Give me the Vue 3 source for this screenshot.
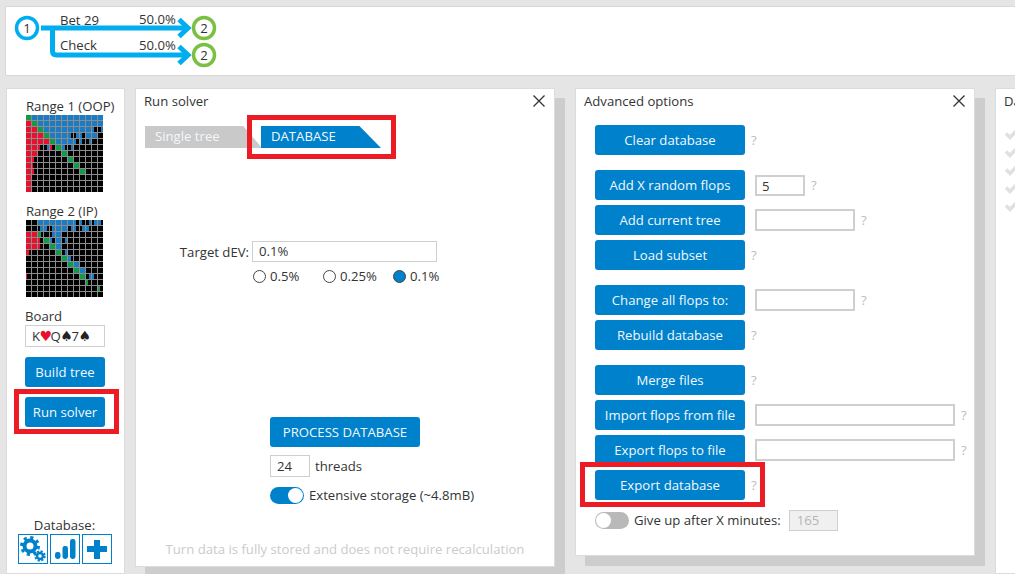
<script setup>
const colors = { G: '#0f9d4a', B: '#1a7cc4', R: '#e8112d', k: '#000000' }
const half = {
  x: 'linear-gradient(90deg,#e8112d 50%,#000 50%)',
  y: 'linear-gradient(90deg,#1a7cc4 50%,#000 50%)',
  z: 'linear-gradient(90deg,#000 50%,#1a7cc4 50%)',
  w: 'linear-gradient(90deg,#e8112d 25%,#000 25%)',
  v: 'linear-gradient(90deg,#0f9d4a 40%,#000 40%)',
  u: 'linear-gradient(90deg,#0f9d4a 70%,#000 70%)'
}
function cells(rows) {
  return rows.join('').split('').map(c => (half[c] ? { background: half[c] } : { background: colors[c] }))
}
const range1 = cells([
  'GBBBBBBBBBBBB',
  'RGBBBBBBBBBBB',
  'RRGBBBBBBBByz',
  'RRRGBBByzyBBk',
  'RRRRGBBByyzkk',
  'RRxzxGyzkkkkk',
  'RRkkkkGkkkkkk',
  'RxkkkkkGkkkkk',
  'RwkkkkkkGkkkk',
  'RxkkkkkkkGkkk',
  'Rkkkkkkkkkkkk',
  'Rkkkkkkkkkkkk',
  'Rkkkkkkkkkkkk'
])
const range2 = cells([
  'kkBBBBBByyzzy',
  'kkzyzBBzyzykk',
  'RRukzBkkkkkkk',
  'RRxGyBzkkkkkk',
  'RRxkGBkkkkkkk',
  'xkkkkGzkkkkkk',
  'kkkkkkGykkkkk',
  'kkkkkkkGBkkkk',
  'kkkkkkkkGBkkk',
  'wkkkkkkkkGzyk',
  'kkkkkkkkkkvkk',
  'kkkkkkkkkkkkv',
  'kkkkkkkkkkkkk'
])
const advanced = [
  { label: 'Clear database', help: true, gap: true },
  { label: 'Add X random flops', value: '5', size: 'xs' },
  { label: 'Add current tree', value: '', size: 'md' },
  { label: 'Load subset', help: true, gap: true },
  { label: 'Change all flops to:', value: '', size: 'md' },
  { label: 'Rebuild database', help: true, gap: true },
  { label: 'Merge files', help: true },
  { label: 'Import flops from file', value: '', size: 'lg' },
  { label: 'Export flops to file', value: '', size: 'lg' },
  { label: 'Export database', help: true, marked: true }
]
</script>

<template>
  <div class="page">
    <header class="topbar">
      <svg class="tree" width="230" height="68" viewBox="0 0 230 68">
        <g fill="none" stroke="#00aeef" stroke-width="5">
          <path d="M36 22H183" />
          <path d="M47.5 22V45q0 4 4 4H183" />
          <path d="M174 13.5l9 8.5-9 8.5M174 40.5l9 8.5-9 8.5" />
          <circle cx="22" cy="22" r="10.5" fill="#fff" stroke-width="3.5" />
        </g>
        <g fill="#fff" stroke="#7ac143" stroke-width="3.5">
          <circle cx="199" cy="22" r="10.5" />
          <circle cx="199" cy="49" r="10.5" />
        </g>
        <g class="tree-text">
          <text x="22" y="27" text-anchor="middle">1</text>
          <text x="199" y="27" text-anchor="middle">2</text>
          <text x="199" y="54" text-anchor="middle">2</text>
          <text x="55" y="19">Bet 29</text>
          <text x="134" y="18">50.0%</text>
          <text x="55" y="44">Check</text>
          <text x="134" y="44">50.0%</text>
        </g>
      </svg>
    </header>

    <main class="workspace">
      <aside class="sidebar">
        <div class="range-label">Range 1 (OOP)</div>
        <div class="matrix">
          <i v-for="(c, i) in range1" :key="i" :style="c"></i>
        </div>
        <div class="range-label second">Range 2 (IP)</div>
        <div class="matrix">
          <i v-for="(c, i) in range2" :key="i" :style="c"></i>
        </div>
        <div class="range-label board">Board</div>
        <div class="field board-field">K<span class="heart">♥</span>Q<span class="spade">♠</span>7<span class="spade">♠</span></div>
        <button class="btn side-btn">Build tree</button>
        <div class="marked">
          <button class="btn side-btn">Run solver</button>
          <span class="mark mark-run"></span>
        </div>
        <div class="db-label">Database:</div>
        <div class="db-icons">
          <div class="db-icon">
            <svg width="26" height="26" viewBox="0 0 26 26" fill="none" stroke="#0081cc">
              <circle cx="10" cy="10" r="5.5" stroke-width="4" />
              <circle cx="10" cy="10" r="8.5" stroke-width="3" stroke-dasharray="3.2 3.47" />
              <circle cx="20" cy="20" r="3" stroke-width="2.4" />
              <circle cx="20" cy="20" r="4.8" stroke-width="1.8" stroke-dasharray="2.2 1.57" />
            </svg>
          </div>
          <div class="db-icon">
            <svg width="26" height="26" viewBox="0 0 26 26" fill="#0081cc">
              <rect x="3" y="16" width="5.5" height="7" rx="2.4" />
              <rect x="10.5" y="10" width="5.5" height="13" rx="2.4" />
              <rect x="18" y="3" width="5.5" height="20" rx="2.4" />
            </svg>
          </div>
          <div class="db-icon">
            <svg width="26" height="26" viewBox="0 0 26 26" fill="#0081cc">
              <path d="M10 4h6v6h7v6h-7v7h-6v-7H3v-6h7z" />
            </svg>
          </div>
        </div>
      </aside>

      <section class="panel solver">
        <div class="panel-title">Run solver</div>
        <span class="close">
          <svg width="12" height="12" viewBox="0 0 12 12"><path d="M.5.5l11 11M11.5.5l-11 11" stroke="#333" stroke-width="1.3" /></svg>
        </span>
        <div class="tabs">
          <div class="tab tab-off">Single tree</div>
          <div class="tab tab-on">DATABASE</div>
          <span class="mark mark-tab"></span>
        </div>
        <div class="target">
          <span class="target-label">Target dEV:</span>
          <div class="field target-field">0.1%</div>
        </div>
        <div class="radios">
          <span class="radio"><i></i>0.5%</span>
          <span class="radio"><i></i>0.25%</span>
          <span class="radio on"><i></i>0.1%</span>
        </div>
        <div class="process">
          <button class="btn process-btn">PROCESS DATABASE</button>
          <div class="threads"><div class="field threads-field">24</div><span>threads</span></div>
          <div class="switch-row"><span class="switch on"></span><span>Extensive storage (~4.8mB)</span></div>
        </div>
        <p class="footnote">Turn data is fully stored and does not require recalculation</p>
      </section>

      <section class="panel options">
        <div class="panel-title">Advanced options</div>
        <span class="close">
          <svg width="12" height="12" viewBox="0 0 12 12"><path d="M.5.5l11 11M11.5.5l-11 11" stroke="#333" stroke-width="1.3" /></svg>
        </span>
        <div class="option-list">
          <div v-for="o in advanced" :key="o.label" class="option" :class="{ gap: o.gap }">
            <button class="btn opt-btn">{{ o.label }}</button>
            <div v-if="o.size" class="field opt-field" :class="o.size">{{ o.value }}</div>
            <span class="help">?</span>
            <span v-if="o.marked" class="mark mark-export"></span>
          </div>
        </div>
        <div class="switch-row giveup">
          <span class="switch"></span><span>Give up after X minutes:</span>
          <div class="field disabled">165</div>
        </div>
      </section>

      <section class="panel third">
        <div class="panel-title">Database</div>
        <div class="checks">
          <svg v-for="n in 5" :key="n" width="13" height="12" viewBox="0 0 13 12"><path d="M1 5.5l4 4L12 2" fill="none" stroke="#e0e0e0" stroke-width="3.4" /></svg>
        </div>
      </section>
    </main>
  </div>
</template>

<style>
html, body { margin: 0; background: #e5e5e5; overflow: hidden; }
</style>

<style scoped>
.page {
  width: 1015px;
  height: 574px;
  overflow: hidden;
  background: #e5e5e5;
  padding-top: 6px;
  box-sizing: border-box;
  font-family: "Open Sans", "Noto Sans", sans-serif;
  font-size: 13.15px;
  color: #333;
}
.topbar {
  height: 70px;
  margin-left: 5px;
  background: #fff;
  border: 1px solid #d8d8d8;
  border-right: 0;
  box-sizing: border-box;
}
.tree { display: block; margin: -1px 0 0 -1px; overflow: visible; }
.tree-text { font-size: 13.15px; fill: #333; }
.workspace {
  display: flex;
  align-items: flex-start;
  margin-top: 12px;
  margin-left: 6px;
}
.sidebar {
  position: relative;
  flex: none;
  width: 119px;
  height: 486px;
  box-sizing: border-box;
  background: #fff;
  border: 1px solid #dcdcdc;
  padding: 9px 0 0 19px;
  margin-right: 10px;
}
.range-label { line-height: 17px; height: 17px; white-space: nowrap; }
.range-label.second { margin-top: 11px; }
.range-label.board { margin-top: 11px; margin-left: -1px; }
.matrix {
  display: grid;
  grid-template-columns: repeat(13, 5px);
  grid-auto-rows: 5px;
  gap: 1px;
  width: 77px;
  background: #8c8c8c;
}
.matrix i { display: block; }
.field {
  box-sizing: border-box;
  height: 22px;
  line-height: 18px;
  background: #fff;
  border: 2px solid #cfcfcf;
  padding: 0 5px;
  font-size: 13.15px;
  color: #333;
}
.board-field {
  width: 80px;
  margin: 0 0 10px -1px;
  padding-left: 6px;
  border-width: 1px;
  line-height: 20px;
  white-space: nowrap;
}
.heart, .spade {
  font-family: "DejaVu Sans", sans-serif;
  font-size: 14px;
  line-height: 0;
  margin: 0 -1.5px 0 -0.5px;
}
.heart { color: #e8112d; }
.spade { color: #222; }
.btn {
  display: block;
  border: 0;
  padding: 0;
  height: 30px;
  border-radius: 3px;
  background: #0081cc;
  color: #f2f8fc;
  font: inherit;
  font-size: 13.15px;
}
.side-btn { width: 80px; margin: 0 0 10px -1px; }
.marked { position: relative; }
.mark { position: absolute; border: 5px solid #ed1c24; box-sizing: border-box; pointer-events: none; }
.mark-run { left: -12px; top: -8px; width: 105px; height: 45px; }
.db-label { position: absolute; left: 0; right: 0; top: 428px; text-align: center; line-height: 17px; padding-right: 2px; }
.db-icons { position: absolute; left: 11px; top: 445px; display: flex; gap: 2px; }
.db-icon {
  box-sizing: border-box;
  width: 30px;
  height: 30px;
  border: 1px solid #0081cc;
  display: flex;
  align-items: center;
  justify-content: center;
}
.panel {
  position: relative;
  flex: none;
  box-sizing: border-box;
  background: #fff;
  border: 1px solid #dcdcdc;
  box-shadow: 10px 10px 0 #cdcdcd;
}
.panel-title { position: absolute; left: 8px; top: 4px; line-height: 17px; white-space: nowrap; }
.close { position: absolute; right: 9px; top: 6px; line-height: 0; }
.solver { width: 420px; height: 479px; margin-right: 20px; }
.tabs { position: absolute; left: 9px; top: 37px; display: flex; }
.tab { height: 22px; line-height: 21px; padding-left: 10px; box-sizing: border-box; color: #f2f8fc; white-space: nowrap; }
.tab-off {
  width: 117px;
  background: #c9c9c9;
  margin-right: -1px;
  clip-path: polygon(0 0, 84% 0, 100% 100%, 0 100%);
}
.tab-on {
  width: 120px;
  background: #0081cc;
  clip-path: polygon(0 0, 82% 0, 100% 100%, 0 100%);
}
.mark-tab { left: 102px; top: -11px; width: 149px; height: 44px; }
.target {
  position: absolute;
  left: 0;
  top: 152px;
  display: flex;
  align-items: center;
}
.target-label { width: 113px; text-align: right; margin-right: 3px; }
.target-field { width: 185px; height: 21px; line-height: 19px; border-width: 1px; padding-left: 6px; }
.radios {
  position: absolute;
  left: 117px;
  top: 179px;
  display: flex;
  line-height: 17px;
}
.radio { display: flex; align-items: center; width: 70px; gap: 4px; white-space: nowrap; }
.radio:last-child { width: auto; }
.radio i {
  box-sizing: border-box;
  width: 13px;
  height: 13px;
  border-radius: 50%;
  border: 1px solid #444;
  background: #fff;
}
.radio.on i { background: #0081cc; }
.process { position: absolute; left: 134px; top: 328px; }
.process-btn { width: 150px; }
.threads { display: flex; align-items: center; gap: 5px; margin-top: 8px; }
.threads-field { width: 40px; border-width: 1px; padding-left: 6px; line-height: 20px; }
.switch-row { display: flex; align-items: center; gap: 5px; margin-top: 10px; white-space: nowrap; line-height: 17px; }
.switch {
  position: relative;
  flex: none;
  width: 34px;
  height: 17px;
  border-radius: 9px;
  background: #b9b9b9;
}
.switch::after {
  content: "";
  position: absolute;
  left: 1px;
  top: 1px;
  width: 15px;
  height: 15px;
  border-radius: 50%;
  background: #fff;
}
.switch.on { background: #0081cc; }
.switch.on::after { left: 18px; }
.footnote {
  position: absolute;
  left: 0;
  right: 0;
  bottom: 8px;
  margin: 0;
  text-align: center;
  color: #cbcbcb;
  line-height: 17px;
}
.options { width: 400px; height: 468px; margin-right: 20px; }
.option-list { position: absolute; left: 19px; top: 36px; }
.option { position: relative; display: flex; align-items: center; height: 30px; margin-bottom: 5px; }
.option.gap { margin-bottom: 15px; }
.opt-btn { width: 150px; flex: none; }
.help { color: #bdbdbd; margin-left: 6px; }
.opt-field { margin-left: 10px; height: 22px; }
.opt-field.xs { width: 50px; height: 21px; }
.opt-field.md { width: 100px; }
.opt-field.lg { width: 200px; }
.mark-export { left: -15px; top: -8px; width: 185px; height: 45px; }
.giveup { position: absolute; left: 19px; top: 421px; margin: 0; }
.disabled {
  width: 49px;
  height: 21px;
  margin-left: 3px;
  background: #f0f0f0;
  color: #b5b5b5;
  border-width: 1px;
  padding-left: 7px;
  line-height: 19px;
}
.third { width: 60px; height: 486px; }
.checks {
  position: absolute;
  left: 9px;
  top: 39px;
  display: flex;
  flex-direction: column;
  gap: 6px;
}
.checks svg { display: block; }
</style>
